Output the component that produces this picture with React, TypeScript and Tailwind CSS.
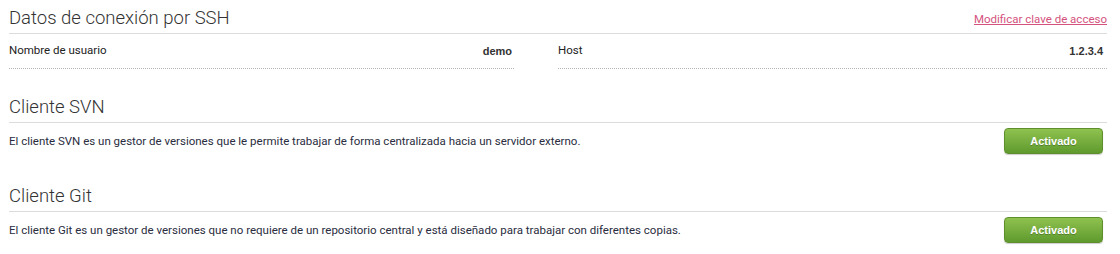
import React from 'react';

const SectionHeader: React.FC<{ title: string; link?: string; className?: string }> = ({ title, link, className = '' }) => (
  <div className={`flex items-end justify-between border-b border-[#dcdcdc] pt-[6px] pb-[3px] ${className}`}>
    <h2 className="text-[18.5px] leading-[24px] font-light text-[#333]">{title}</h2>
    {link && (
      <a href="#" className="text-[11.5px] leading-[18px] mb-[2px] text-[#d4527e] underline">
        {link}
      </a>
    )}
  </div>
);

const ActiveButton: React.FC = () => (
  <button
    type="button"
    className="w-[99px] h-[26px] shrink-0 rounded-[4px] border border-[#5f8f2c] bg-gradient-to-b from-[#8fc24f] to-[#5f9a2e] text-white text-[11px] font-bold shadow-[0_1px_1px_rgba(0,0,0,0.2)] [text-shadow:0_1px_0_rgba(0,0,0,0.25)] [font-family:'Liberation_Sans',Arial,sans-serif]"
  >
    Activado
  </button>
);

const ClientSection: React.FC<{ title: string; text: string; className?: string }> = ({ title, text, className = '' }) => (
  <div className={className}>
    <SectionHeader title={title} />
    <div className="flex items-center justify-between pt-[5px] pb-[5px] pr-[4px]">
      <p className="text-[11.5px] leading-[14px] text-[#2a2d40]">{text}</p>
      <ActiveButton />
    </div>
  </div>
);

export default function App() {
  return (
    <div className="w-[1120px] h-[254px] bg-white pl-[9px] pr-[13px] [font-family:Roboto,'Liberation_Sans',sans-serif]">
      <SectionHeader title="Datos de conexión por SSH" link="Modificar clave de acceso" />
      <div className="flex justify-between">
        <div className="w-[46%] h-[35px] flex items-center justify-between border-b border-dotted border-[#b5b5b5] pr-[2px]">
          <span className="text-[11.5px] text-[#222]">Nombre de usuario</span>
          <span className="text-[11px] font-bold text-[#333] [font-family:'Liberation_Sans',Arial,sans-serif]">demo</span>
        </div>
        <div className="w-[50%] h-[35px] flex items-center justify-between border-b border-dotted border-[#b5b5b5] pr-[4px]">
          <span className="text-[11.5px] text-[#222]">Host</span>
          <span className="text-[11px] font-bold text-[#333] [font-family:'Liberation_Sans',Arial,sans-serif]">1.2.3.4</span>
        </div>
      </div>
      <ClientSection
        className="mt-[20px]"
        title="Cliente SVN"
        text="El cliente SVN es un gestor de versiones que le permite trabajar de forma centralizada hacia un servidor externo."
      />
      <ClientSection
        className="mt-[19px]"
        title="Cliente Git"
        text="El cliente Git es un gestor de versiones que no requiere de un repositorio central y está diseñado para trabajar con diferentes copias."
      />
    </div>
  );
}
